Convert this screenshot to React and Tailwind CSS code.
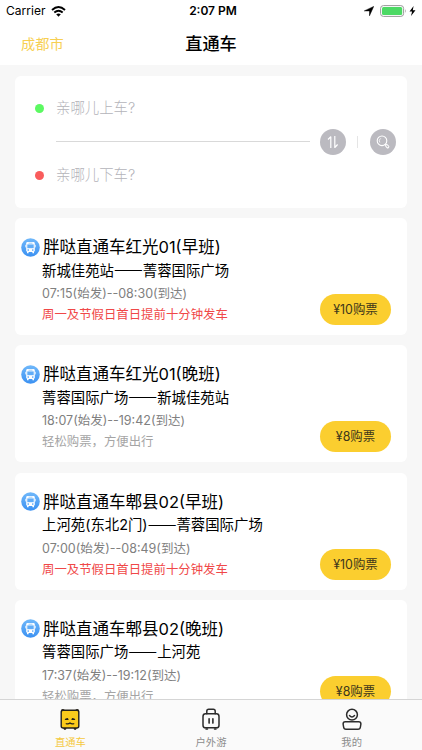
import React, { useState } from 'react';

const routes = [
    {
        id: 1,
        name: '胖哒直通车红光01(早班)',
        from: '新城佳苑站',
        to: '菁蓉国际广场',
        time: '07:15(始发)--08:30(到达)',
        notice: '周一及节假日首日提前十分钟发车',
        urgent: true,
        price: 10
    },
    {
        id: 2,
        name: '胖哒直通车红光01(晚班)',
        from: '菁蓉国际广场',
        to: '新城佳苑站',
        time: '18:07(始发)--19:42(到达)',
        notice: '轻松购票，方便出行',
        urgent: false,
        price: 8
    },
    {
        id: 3,
        name: '胖哒直通车郫县02(早班)',
        from: '上河苑(东北2门)',
        to: '菁蓉国际广场',
        time: '07:00(始发)--08:49(到达)',
        notice: '周一及节假日首日提前十分钟发车',
        urgent: true,
        price: 10
    },
    {
        id: 4,
        name: '胖哒直通车郫县02(晚班)',
        from: '箐蓉国际广场',
        to: '上河苑',
        time: '17:37(始发)--19:12(到达)',
        notice: '轻松购票，方便出行',
        urgent: false,
        price: 8
    }
];

const BusIcon = () => (
    <svg width="19" height="19" viewBox="0 0 19 19" className="shrink-0">
        <defs>
            <linearGradient id="bus" x1="0" y1="0" x2="0" y2="1">
                <stop offset="0" stopColor="#70b8fa" />
                <stop offset="1" stopColor="#3b91f2" />
            </linearGradient>
        </defs>
        <circle cx="9.5" cy="9.5" r="9.3" fill="url(#bus)" />
        <rect x="5.2" y="4" width="8.6" height="10" rx="1.4" fill="#fff" />
        <rect x="6.3" y="6.4" width="6.4" height="3.8" fill="#60acf7" />
        <path d="M7.5 5.2h4" stroke="#60acf7" strokeWidth="0.6" />
        <path d="M4.6 6.8v2.6M14.4 6.8v2.6" stroke="#fff" strokeWidth="0.7" />
        <path d="M6.8 13.5v1.7M12.2 13.5v1.7" stroke="#fff" strokeWidth="1.6" />
        <circle cx="7.2" cy="12.1" r="0.8" fill="#4b9ef5" />
        <circle cx="11.8" cy="12.1" r="0.8" fill="#4b9ef5" />
    </svg>
);

const PandaIcon = () => (
    <svg width="24" height="24" viewBox="0 0 24 24">
        <path d="M6 20v1.200h1.800V20M16.200 20v1.200H18V20" fill="#26221c" stroke="#26221c" />
        <circle cx="4.800" cy="2.900" r="2" fill="#26221c" />
        <circle cx="19.200" cy="2.900" r="2" fill="#26221c" />
        <rect x="3.200" y="2.200" width="17.600" height="17.800" rx="2" fill="#fccb1c" stroke="#26221c" strokeWidth="1.400" />
        <path d="M6.600 12.100q.4-2.200 3.200-2.200.8.900.8 2.200zM17.400 12.100q-.4-2.200-3.200-2.200-.8.900-.8 2.200z" fill="#26221c" />
        <path d="M8.200 15.700q2.200.8 3.800-.7 1.600 1.500 3.800.7" fill="none" stroke="#26221c" strokeWidth="1.200" strokeLinecap="round" strokeLinejoin="round" />
    </svg>
);

const SuitcaseIcon = () => (
    <svg width="24" height="24" viewBox="0 0 24 24" fill="none" stroke="#2b2b2b" strokeWidth="1.500" strokeLinecap="round">
        <path d="M7.800 5.800V3.200q0-1.900 1.900-1.900h4.600q1.900 0 1.900 1.900v2.600" />
        <rect x="4" y="5.800" width="16" height="14" rx="2.600" />
        <path d="M10.100 10.700v4.400M13.900 10.700v4.400" strokeWidth="1.600" />
        <path d="M7 20.900h1.500M15.500 20.900h1.500" strokeWidth="1.500" />
    </svg>
);

const UserIcon = () => (
    <svg width="24" height="24" viewBox="0 0 24 24" fill="none" stroke="#2b2b2b" strokeWidth="1.500" strokeLinecap="round" strokeLinejoin="round">
        <circle cx="12" cy="6.700" r="5.400" />
        <path d="M9.500 7.500q2.500 2.900 5 0" />
        <path d="M5.300 13.800h13.400q2.200 0 2.200 2.200l-.5 3q-.3 2.200-2.400 2.200H6q-2.100 0-2.400-2.200l-.5-3q0-2.200 2.200-2.200z" />
    </svg>
);

const tabs = [
    { key: 'bus', label: '直通车', Icon: PandaIcon },
    { key: 'trip', label: '户外游', Icon: SuitcaseIcon },
    { key: 'me', label: '我的', Icon: UserIcon }
];

const StatusBar = () => (
    <div className="grid h-[22px] grid-cols-3 items-center px-[6px] text-[12px] text-black">
        <div className="flex items-center gap-[5px]">
            <span className="tracking-[0.05px]">Carrier</span>
            <svg width="15" height="11" viewBox="0 0 15 11" fill="none" stroke="#000" strokeWidth="1.900">
                <path d="M1 4Q7.500-1.800 14 4M3.300 6.500q4.200-3.600 8.400 0" />
                <path d="M5.200 8.300q2.300-1.800 4.600 0L7.500 10.700z" fill="#000" stroke="none" />
            </svg>
        </div>
        <div className="pl-[4px] text-center font-semibold whitespace-nowrap">2:07 PM</div>
        <div className="flex items-center justify-end">
            <svg width="10" height="10" viewBox="0 0 10 10">
                <path d="M9.700.4L5.500 9.800V4.900H.3z" fill="#000" stroke="#000" strokeWidth="0.500" strokeLinejoin="round" />
            </svg>
            <svg width="27" height="12" viewBox="0 0 27 12" className="ml-[6px]">
                <rect x="0.600" y="0.600" width="23" height="10.800" rx="2.800" fill="#fff" stroke="#999" />
                <rect x="2" y="2" width="20.200" height="8" rx="1.500" fill="#4cd964" />
                <path d="M25 4q1.500 2 0 4z" fill="#999" />
            </svg>
            <svg width="7" height="10" viewBox="0 0 7 10" className="ml-[2px]">
                <path d="M4.600 0L.5 5.600h2.600L2 10l4.500-5.800H3.800z" fill="#000" />
            </svg>
        </div>
    </div>
);

const StopField = ({ dot, label }) => (
    <div className="flex h-[22px] items-center gap-[12px]">
        <span className={`size-[9px] rounded-full ${dot}`} />
        <span className="text-[14.400px] font-light text-[#b4b4ba]">{label}</span>
    </div>
);

const SearchCard = () => (
    <section className="mx-[15px] mt-[11px] flex h-[132px] shrink-0 flex-col justify-between rounded-[6px] bg-white pt-[21px] pr-[11px] pb-[22px] pl-[20px]">
        <StopField dot="bg-[#5cf962]" label="亲哪儿上车?" />
        <div className="flex items-center pl-[21px]">
            <div className="h-px flex-1 bg-[#d9d9d9]" />
            <button className="ml-[10px] flex size-[26px] items-center justify-center rounded-full bg-[#bbbac0]">
                <svg width="14" height="14" viewBox="0 0 14 14" fill="none" stroke="#fff" strokeWidth="1.200" strokeLinejoin="round">
                    <path d="M2 4.500L4.800 1.800V13M8.800 1v11.500l2.800-3" />
                </svg>
            </button>
            <div className="ml-[11px] h-[12px] w-px bg-[#e5e5e5]" />
            <button className="ml-[12px] flex size-[26px] items-center justify-center rounded-full bg-[#bbbac0]">
                <svg width="14" height="14" viewBox="0 0 14 14" fill="none" stroke="#fff">
                    <circle cx="6" cy="5.800" r="4.800" strokeWidth="1.100" />
                    <path d="M3.800 7.500a3 3 0 0 1 1-4.200" strokeWidth="0.800" />
                    <path d="M9.300 9.200l.9.900" />
                    <rect x="-1.300" y="-0.900" width="3.600" height="2.200" rx="1" transform="translate(11 10.700) rotate(45)" />
                </svg>
            </button>
        </div>
        <StopField dot="bg-[#f95c5c]" label="亲哪儿下车?" />
    </section>
);

const RouteCard = ({ route }) => (
    <article className="flex h-[117px] shrink-0 justify-between rounded-[6px] bg-white pt-[17px] pr-[16px] pb-[10px] pl-[6px]">
        <div className="whitespace-nowrap">
            <div className="flex h-[24px] items-center gap-[3px]">
                <BusIcon />
                <h2 className="pt-px text-[16.500px] text-black">{route.name}</h2>
            </div>
            <div className="pl-[21px]">
                <p className="flex h-[23px] items-center text-[14.400px] leading-[22px] text-black">
                    <span>{route.from}</span>
                    <span className="pb-[5px] font-['Noto_Sans_CJK_SC',sans-serif] text-[17.200px]">——</span>
                    <span>{route.to}</span>
                </p>
                <p className="h-[22px] text-[12.500px] leading-[23px] text-[#808080]">{route.time}</p>
                <p className={`h-[21px] text-[12.400px] leading-[21px] ${route.urgent ? 'text-[#f04848]' : 'text-[#a5a5a5]'}`}>
                    {route.notice}
                </p>
            </div>
        </div>
        <button className="h-[31px] w-[71px] self-end rounded-full bg-[#fbce2f] pt-[2px] text-[12.400px] text-[#40371b]">
            ¥{route.price}购票
        </button>
    </article>
);

const App = () => {
    const [active, setActive] = useState('bus');

    return (
        <div className="flex h-screen flex-col overflow-hidden bg-[#f7f7f7] font-['Inter','Noto_Sans_CJK_SC',sans-serif]">
            <header className="h-[65px] shrink-0 bg-white">
                <StatusBar />
                <div className="grid h-[43px] grid-cols-3 items-center px-[21px]">
                    <span className="text-[14.200px] text-[#f7cf52]">成都市</span>
                    <h1 className="text-center text-[17.200px] font-medium text-black">直通车</h1>
                </div>
            </header>

            <main className="flex min-h-0 flex-1 flex-col overflow-hidden">
                <SearchCard />
                <div className="mx-[15px] mt-[10px] flex flex-col gap-[10.300px]">
                    {routes.map((route) => (
                        <RouteCard key={route.id} route={route} />
                    ))}
                </div>
            </main>

            <nav className="grid h-[51px] shrink-0 grid-cols-3 border-t border-[#d5d5d5] bg-[#fafafa]">
                {tabs.map(({ key, label, Icon }) => (
                    <button key={key} onClick={() => setActive(key)} className="flex flex-col items-center pt-[8px]">
                        <Icon />
                        <span className={`mt-[3px] text-[10.300px] leading-[14px] ${active === key ? 'text-[#f5c93f]' : 'text-[#8c8c8c]'}`}>
                            {label}
                        </span>
                    </button>
                ))}
            </nav>
        </div>
    );
};

export default App;
